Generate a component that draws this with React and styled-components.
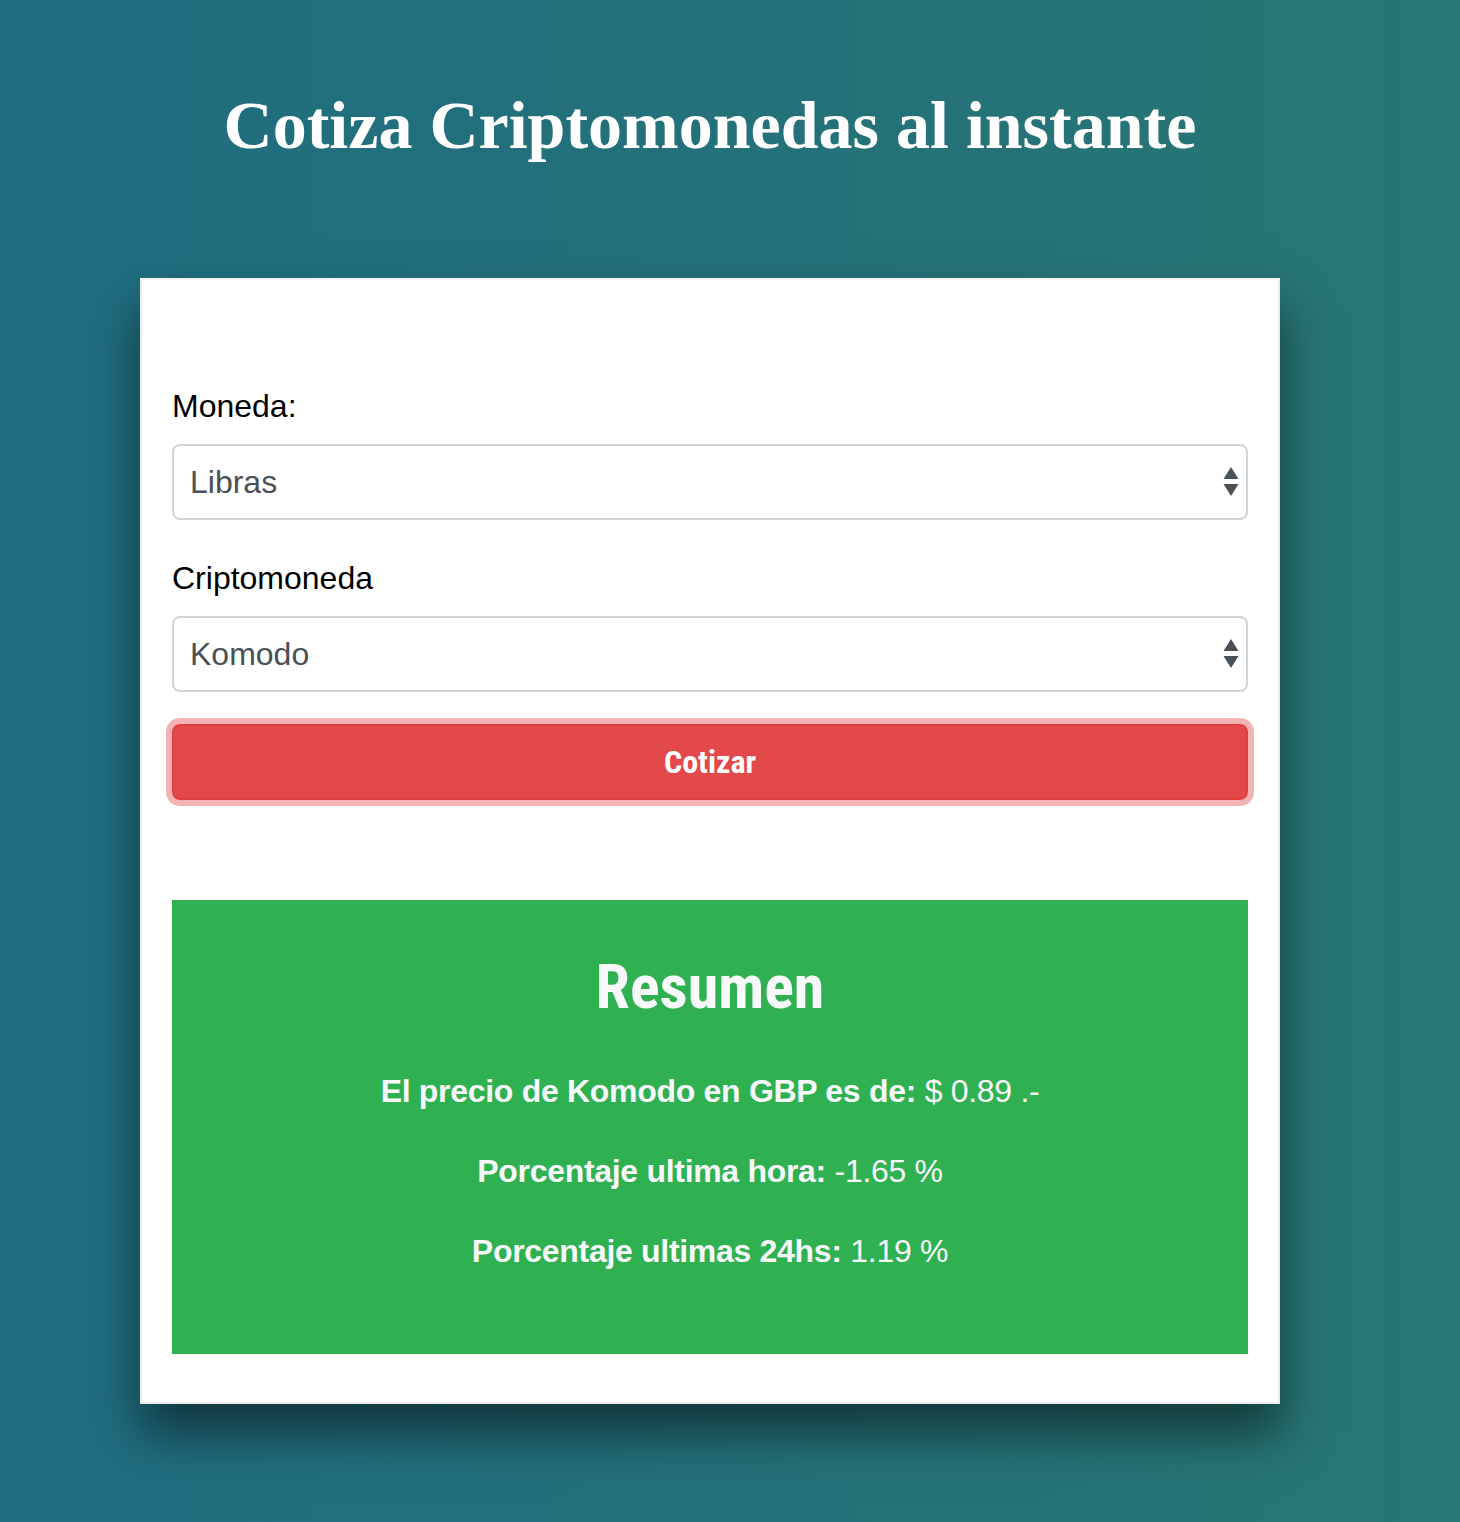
import React, { useState } from "react";
import styled, { createGlobalStyle } from "styled-components";

const GlobalStyle = createGlobalStyle`
  * {
    box-sizing: border-box;
  }
  body {
    margin: 0;
    font-family: "Liberation Sans", Arial, sans-serif;
  }
`;

const monedas = [
  { code: "USD", name: "Dolar Estadounidense" },
  { code: "MXN", name: "Peso Mexicano" },
  { code: "EUR", name: "Euro" },
  { code: "GBP", name: "Libras" },
];

const criptos = [
  { code: "BTC", name: "Bitcoin" },
  { code: "ETH", name: "Ethereum" },
  { code: "KMD", name: "Komodo" },
];

function App() {
  const [moneda, setMoneda] = useState("GBP");
  const [cripto, setCripto] = useState("KMD");

  const cotizacion = {
    precio: "$ 0.89",
    hora: "-1.65",
    dia: "1.19",
  };

  const criptoNombre = criptos.find((c) => c.code === cripto).name;

  return (
    <Page>
      <GlobalStyle />
      <Container>
        <Heading>Cotiza Criptomonedas al instante</Heading>
        <Card>
          <form onSubmit={(e) => e.preventDefault()}>
            <FormGroup>
              <Label>Moneda:</Label>
              <SelectWrap>
                <Select value={moneda} onChange={(e) => setMoneda(e.target.value)}>
                  {monedas.map((m) => (
                    <option key={m.code} value={m.code}>
                      {m.name}
                    </option>
                  ))}
                </Select>
                <Arrows />
              </SelectWrap>
            </FormGroup>
            <FormGroup>
              <Label>Criptomoneda</Label>
              <SelectWrap>
                <Select value={cripto} onChange={(e) => setCripto(e.target.value)}>
                  {criptos.map((c) => (
                    <option key={c.code} value={c.code}>
                      {c.name}
                    </option>
                  ))}
                </Select>
                <Arrows />
              </SelectWrap>
            </FormGroup>
            <Button type="submit">Cotizar</Button>
          </form>

          <Result>
            <ResultTitle>Resumen</ResultTitle>
            <ResultLine>
              <strong>
                El precio de {criptoNombre} en {moneda} es de:
              </strong>{" "}
              {cotizacion.precio} .-
            </ResultLine>
            <ResultLine>
              <strong>Porcentaje ultima hora:</strong> {cotizacion.hora} %
            </ResultLine>
            <ResultLine>
              <strong>Porcentaje ultimas 24hs:</strong> {cotizacion.dia} %
            </ResultLine>
          </Result>
        </Card>
      </Container>
    </Page>
  );
}

const Arrows = () => (
  <ArrowIcon width="16" height="30" viewBox="0 0 16 30">
    <path d="M8 0 L15.5 12 L0.5 12 Z" fill="#495057" />
    <path d="M0.5 17 L15.5 17 L8 29 Z" fill="#495057" />
  </ArrowIcon>
);

export default App;

const Page = styled.div`
  min-height: 100vh;
  background: linear-gradient(to right, #1f6c80, #287673);
  padding-bottom: 118px;
`;

const Container = styled.div`
  width: 1140px;
  margin-left: 140px;
  padding-top: 91px;
`;

const Heading = styled.h1`
  margin: 0 0 119px;
  font-family: "Liberation Serif", "Times New Roman", serif;
  font-size: 68px;
  line-height: 68px;
  font-weight: 700;
  color: #fff;
  text-align: center;
`;

const Card = styled.div`
  background: #fff;
  border: 2px solid #ebebeb;
  border-top-color: #f4f4f4;
  padding: 102px 30px 48px;
  box-shadow: 0 30px 46px rgba(0, 0, 0, 0.5);
`;

const FormGroup = styled.div`
  margin-bottom: 34px;

  &:nth-child(2) {
    margin-bottom: 32px;
  }
`;

const Label = styled.label`
  display: block;
  font-size: 32px;
  line-height: 48px;
  color: #000;
  margin-bottom: 14px;
`;

const SelectWrap = styled.div`
  position: relative;
`;

const Select = styled.select`
  display: block;
  width: 100%;
  height: 76px;
  appearance: none;
  -webkit-appearance: none;
  background: #fff;
  border: 2px solid #ced4da;
  border-radius: 8px;
  padding: 0 60px 0 16px;
  font-family: inherit;
  font-size: 32px;
  color: #495057;
  outline: none;
`;

const ArrowIcon = styled.svg`
  position: absolute;
  right: 9px;
  top: 50%;
  transform: translateY(-50%);
  pointer-events: none;
`;

const Button = styled.button`
  display: block;
  width: 100%;
  height: 76px;
  border: 2px solid #e14043;
  border-radius: 8px;
  background: #e3494a;
  box-shadow: 0 0 0 6px #f3b3b4;
  color: #fff;
  font-family: "Liberation Sans Narrow", "Roboto Condensed", "Liberation Sans", sans-serif;
  font-stretch: condensed;
  font-weight: 700;
  font-size: 32px;
  cursor: pointer;
`;

const Result = styled.div`
  margin-top: 100px;
  background: #2fb152;
  color: #f8f9fa;
  text-align: center;
  padding: 50px 0 47px;
`;

const ResultTitle = styled.h2`
  margin: 0 0 43px;
  font-family: "Liberation Sans Narrow", "Roboto Condensed", "Liberation Sans", sans-serif;
  font-stretch: condensed;
  font-weight: 700;
  font-size: 62px;
  line-height: 1.2;
`;

const ResultLine = styled.p`
  margin: 0 0 32px;
  font-size: 32px;
  line-height: 48px;
  letter-spacing: -0.3px;

  strong {
    font-weight: 700;
  }
`;
